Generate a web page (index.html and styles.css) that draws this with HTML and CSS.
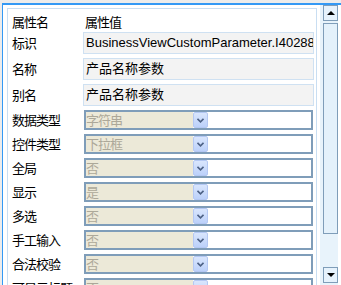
FILE: index.html
```html
<!DOCTYPE html>
<html lang="zh">
<head>
  <meta charset="UTF-8">
  <title>属性</title>
  <link rel="stylesheet" href="styles.css">
</head>
<body>
<div class="pane">
  <div class="grid">
    <div class="row head">
      <span class="name">属性名</span>
      <span class="title">属性值</span>
    </div>
    <div class="row text-row">
      <span class="name">标识</span>
      <div class="field">BusinessViewCustomParameter.I402880e5</div>
    </div>
    <div class="row text-row">
      <span class="name">名称</span>
      <div class="field">产品名称参数</div>
    </div>
    <div class="row text-row">
      <span class="name">别名</span>
      <div class="field">产品名称参数</div>
    </div>
    <div class="row combo-row">
      <span class="name">数据类型</span>
      <div class="select"><span class="face">字符串</span><span class="drop"><svg width="7" height="5" viewBox="0 0 7 5"><path d="M0.5 0.8 L3.5 3.8 L6.5 0.8" fill="none" stroke="#4d6185" stroke-width="1.6"/></svg></span></div>
    </div>
    <div class="row combo-row">
      <span class="name">控件类型</span>
      <div class="select"><span class="face">下拉框</span><span class="drop"><svg width="7" height="5" viewBox="0 0 7 5"><path d="M0.5 0.8 L3.5 3.8 L6.5 0.8" fill="none" stroke="#4d6185" stroke-width="1.6"/></svg></span></div>
    </div>
    <div class="row combo-row">
      <span class="name">全局</span>
      <div class="select"><span class="face">否</span><span class="drop"><svg width="7" height="5" viewBox="0 0 7 5"><path d="M0.5 0.8 L3.5 3.8 L6.5 0.8" fill="none" stroke="#4d6185" stroke-width="1.6"/></svg></span></div>
    </div>
    <div class="row combo-row">
      <span class="name">显示</span>
      <div class="select"><span class="face">是</span><span class="drop"><svg width="7" height="5" viewBox="0 0 7 5"><path d="M0.5 0.8 L3.5 3.8 L6.5 0.8" fill="none" stroke="#4d6185" stroke-width="1.6"/></svg></span></div>
    </div>
    <div class="row combo-row">
      <span class="name">多选</span>
      <div class="select"><span class="face">否</span><span class="drop"><svg width="7" height="5" viewBox="0 0 7 5"><path d="M0.5 0.8 L3.5 3.8 L6.5 0.8" fill="none" stroke="#4d6185" stroke-width="1.6"/></svg></span></div>
    </div>
    <div class="row combo-row">
      <span class="name">手工输入</span>
      <div class="select"><span class="face">否</span><span class="drop"><svg width="7" height="5" viewBox="0 0 7 5"><path d="M0.5 0.8 L3.5 3.8 L6.5 0.8" fill="none" stroke="#4d6185" stroke-width="1.6"/></svg></span></div>
    </div>
    <div class="row combo-row">
      <span class="name">合法校验</span>
      <div class="select"><span class="face">否</span><span class="drop"><svg width="7" height="5" viewBox="0 0 7 5"><path d="M0.5 0.8 L3.5 3.8 L6.5 0.8" fill="none" stroke="#4d6185" stroke-width="1.6"/></svg></span></div>
    </div>
    <div class="row combo-row">
      <span class="name">可显示标题</span>
      <div class="select"><span class="face">否</span><span class="drop"><svg width="7" height="5" viewBox="0 0 7 5"><path d="M0.5 0.8 L3.5 3.8 L6.5 0.8" fill="none" stroke="#4d6185" stroke-width="1.6"/></svg></span></div>
    </div>
  </div>
  <div class="scrollbar">
    <div class="sb-btn"><span class="tri-up"></span></div>
    <div class="thumb"></div>
    <div class="sb-space"></div>
    <div class="sb-btn"><span class="tri-down"></span></div>
  </div>
</div>
</body>
</html>
```

FILE: styles.css
```css
body {
  margin: 0;
  height: 285px;
  overflow: hidden;
  background: #ececec;
  font-family: "Noto Sans CJK SC", sans-serif;
  font-size: 13px;
  letter-spacing: -1px;
  color: #000;
}

/* окно с синей рамкой */
.pane {
  margin: 3px 0 0 2px;
  height: 280px;
  border-top: 2px solid #3399f5;
  border-left: 1px solid #3399f5;
  background: #fff;
  display: flex;
  overflow: hidden;
}

.grid {
  margin: 3px 0 0 4px;
  width: 310px;
  box-sizing: border-box;
  border: 1px solid #c9def2;
  border-bottom: none;
  display: flex;
  flex-direction: column;
  overflow: hidden;
}

.row {
  display: flex;
  align-items: flex-start;
  flex-shrink: 0;
}

.name {
  width: 71px;
  flex-shrink: 0;
  padding-left: 4px;
  white-space: nowrap;
}

.head {
  height: 23px;
  align-items: center;
  padding-top: 2px;
  box-sizing: border-box;
}

.title {
  padding-left: 2px;
}

.text-row {
  height: 26px;
}

.text-row .name {
  line-height: 22px;
}

.field {
  width: 231px;
  height: 22px;
  box-sizing: border-box;
  border: 1px solid #cfe1f2;
  background: #f3f3f3;
  padding-left: 2px;
  font-family: "Liberation Sans", "Noto Sans CJK SC", sans-serif;
  font-size: 13px;
  letter-spacing: 0;
  line-height: 20px;
  white-space: nowrap;
  overflow: hidden;
}

.combo-row {
  height: 24px;
}

.combo-row .name {
  line-height: 20px;
}

.select {
  margin-left: 1px;
  width: 229px;
  height: 20px;
  box-sizing: border-box;
  border: 2px solid #7f9db9;
  background: #fff;
  display: flex;
}

.face {
  width: 107px;
  background: #ece9d8;
  color: #aca899;
  line-height: 16px;
  white-space: nowrap;
}

.drop {
  width: 15px;
  height: 16px;
  box-sizing: border-box;
  border: 1px solid #b4c8f3;
  border-radius: 2px;
  background: linear-gradient(#d9e6fd, #bcd1fa);
  display: flex;
  align-items: center;
  justify-content: center;
}

/* полоса прокрутки */
.scrollbar {
  margin-left: 3px;
  width: 18px;
  box-sizing: border-box;
  padding: 0 0 2px 3px;
  background: #e8f3fb;
  display: flex;
  flex-direction: column;
}

.sb-btn {
  height: 14px;
  flex-shrink: 0;
  border: 1px solid #7f9db9;
  background: #e6f2fc;
  display: flex;
  align-items: center;
  justify-content: center;
}

.tri-up {
  width: 0;
  height: 0;
  border-left: 4px solid transparent;
  border-right: 4px solid transparent;
  border-bottom: 4px solid #000;
}

.tri-down {
  width: 0;
  height: 0;
  border-left: 4px solid transparent;
  border-right: 4px solid transparent;
  border-top: 4px solid #000;
}

.thumb {
  margin-top: 2px;
  height: 209px;
  flex-shrink: 0;
  border: 1px solid #7f9db9;
  background: #e4f1fb;
}

.sb-space {
  flex: 1;
}
```
